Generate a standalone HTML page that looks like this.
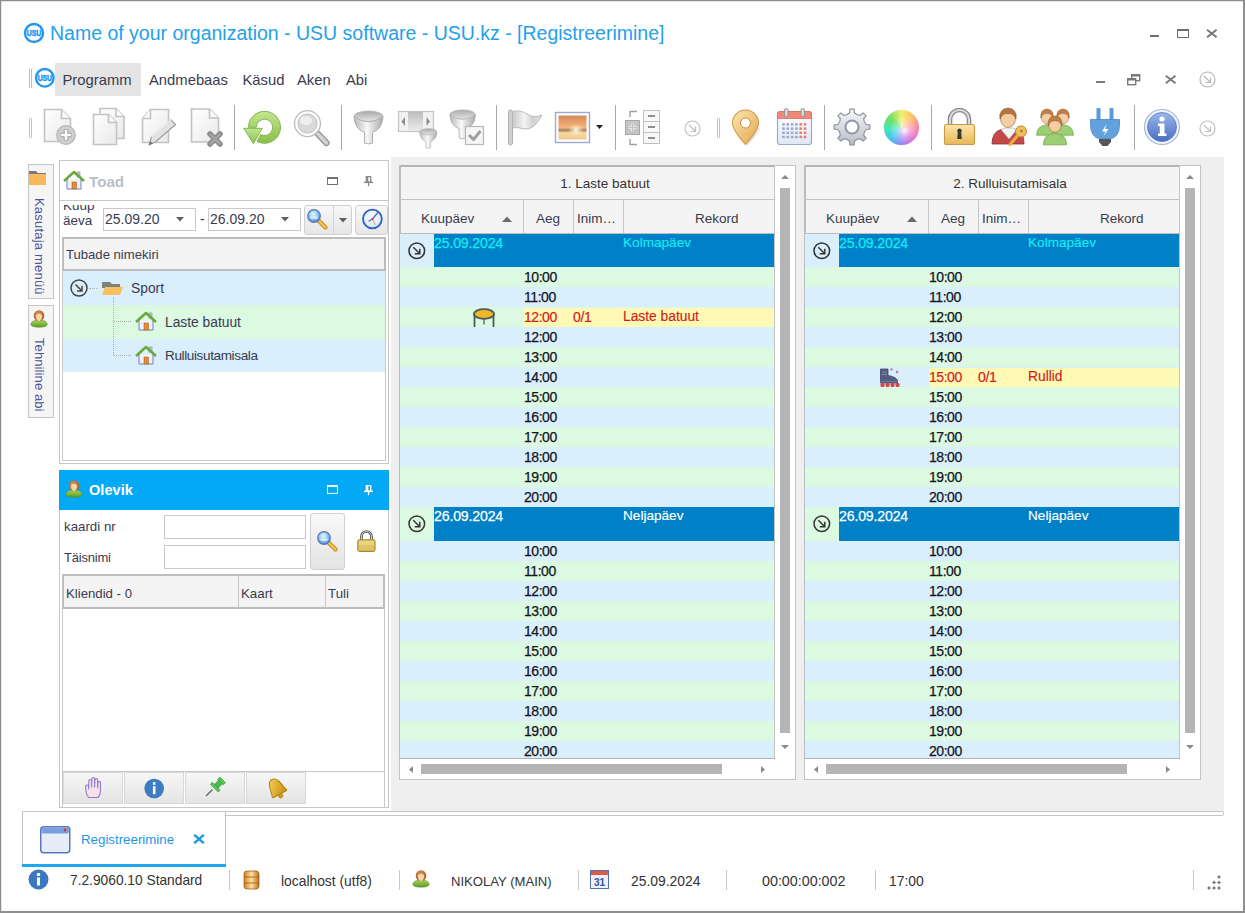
<!DOCTYPE html><html><head><meta charset="utf-8"><style>
html,body{margin:0;padding:0;}
body{width:1245px;height:913px;overflow:hidden;position:relative;background:#fff;font-family:"Liberation Sans", sans-serif;}
div,svg{box-sizing:border-box;}
</style></head><body><div style="position:absolute;left:0px;top:0px;width:1245px;height:913px;border:1px solid #8e8e8e;border-right:2px solid #8e8e8e;border-bottom:2px solid #8e8e8e;box-shadow:inset 1px 1px 0 #e4e4e4;"></div><svg style="position:absolute;left:23px;top:22px;" width="22" height="22" viewBox="0 0 22 22"><circle cx="11" cy="11" r="9" fill="none" stroke="#2196f3" stroke-width="2.4"/><text x="11" y="14.0" text-anchor="middle" font-family="Liberation Sans" font-weight="bold" font-size="8.5" textLength="14.6" lengthAdjust="spacingAndGlyphs" fill="#2196f3" stroke="#2196f3" stroke-width="0.5">USU</text></svg><div style="position:absolute;left:50px;top:22.24px;font-size:19.5px;line-height:22px;color:#25a0ea;font-weight:normal;white-space:nowrap;">Name of your organization - USU software - USU.kz - [Registreerimine]</div><div style="position:absolute;left:1150px;top:35px;width:9px;height:2px;background:#6e6e6e;"></div><div style="position:absolute;left:1177px;top:29px;width:12px;height:9px;border:1.5px solid #6e6e6e;border-top-width:2.5px;"></div><svg style="position:absolute;left:1206px;top:29px;" width="12" height="9" viewBox="0 0 12 9"><path d="M1 0.8 L10.6 8.2 M10.6 0.8 L1 8.2" stroke="#777" stroke-width="2"/></svg><div style="position:absolute;left:29px;top:69px;width:1px;height:19px;background:#bdbdbd;"></div><div style="position:absolute;left:31px;top:69px;width:1px;height:19px;background:#bdbdbd;"></div><svg style="position:absolute;left:34.2px;top:67.2px;" width="21.6" height="21.6" viewBox="0 0 21.6 21.6"><circle cx="10.8" cy="10.8" r="8.8" fill="none" stroke="#2196f3" stroke-width="2.4"/><text x="10.8" y="13.8" text-anchor="middle" font-family="Liberation Sans" font-weight="bold" font-size="8.4" textLength="14.3" lengthAdjust="spacingAndGlyphs" fill="#2196f3" stroke="#2196f3" stroke-width="0.5">USU</text></svg><div style="position:absolute;left:55px;top:63px;width:86px;height:33px;background:#e4e4e4;"></div><div style="position:absolute;left:62.5px;top:71.87px;font-size:14.8px;line-height:17px;color:#3b3b4d;font-weight:normal;white-space:nowrap;">Programm</div><div style="position:absolute;left:149px;top:71.87px;font-size:14.8px;line-height:17px;color:#3b3b4d;font-weight:normal;white-space:nowrap;">Andmebaas</div><div style="position:absolute;left:242.5px;top:71.87px;font-size:14.8px;line-height:17px;color:#3b3b4d;font-weight:normal;white-space:nowrap;">Käsud</div><div style="position:absolute;left:297px;top:71.87px;font-size:14.8px;line-height:17px;color:#3b3b4d;font-weight:normal;white-space:nowrap;">Aken</div><div style="position:absolute;left:346px;top:71.87px;font-size:14.8px;line-height:17px;color:#3b3b4d;font-weight:normal;white-space:nowrap;">Abi</div><div style="position:absolute;left:1096px;top:81px;width:9px;height:2px;background:#7a7a7a;"></div><svg style="position:absolute;left:1127px;top:73px;" width="14" height="13" viewBox="0 0 14 13"><rect x="4.7" y="1.7" width="8" height="6" fill="none" stroke="#7a7a7a" stroke-width="1.4"/><path d="M4.7 2.5 H12.7" stroke="#7a7a7a" stroke-width="2"/><rect x="0.7" y="5.7" width="8" height="6" fill="#fff" stroke="#7a7a7a" stroke-width="1.4"/><path d="M0.7 6.5 H8.7" stroke="#7a7a7a" stroke-width="2"/></svg><svg style="position:absolute;left:1165px;top:75px;" width="12" height="9" viewBox="0 0 12 9"><path d="M0.8 0.8 L10.5 8.2 M10.5 0.8 L0.8 8.2" stroke="#7a7a7a" stroke-width="2"/></svg><svg style="position:absolute;left:1197.5px;top:70.0px;" width="19.0" height="19.0" viewBox="0 0 19.0 19.0"><circle cx="9.5" cy="9.5" r="7.5" fill="none" stroke="#b8b8b8" stroke-width="1.2"/><path d="M6.0 6.0 L12.5 12.5 M12.5 7.5 L12.5 12.5 L7.5 12.5" fill="none" stroke="#b8b8b8" stroke-width="1.2"/></svg><div style="position:absolute;left:29px;top:118px;width:1px;height:20px;background:#c4c4c4;"></div><div style="position:absolute;left:31px;top:118px;width:1px;height:20px;background:#c4c4c4;"></div><div style="position:absolute;left:234px;top:105px;width:1px;height:45px;background:#a8a8a8;"></div><div style="position:absolute;left:341px;top:105px;width:1px;height:45px;background:#a8a8a8;"></div><div style="position:absolute;left:496px;top:105px;width:1px;height:45px;background:#a8a8a8;"></div><div style="position:absolute;left:615px;top:105px;width:1px;height:45px;background:#a8a8a8;"></div><div style="position:absolute;left:824px;top:105px;width:1px;height:45px;background:#a8a8a8;"></div><div style="position:absolute;left:931px;top:105px;width:1px;height:45px;background:#a8a8a8;"></div><div style="position:absolute;left:1134px;top:105px;width:1px;height:45px;background:#a8a8a8;"></div><div style="position:absolute;left:717px;top:118px;width:1px;height:20px;background:#c4c4c4;"></div><div style="position:absolute;left:719px;top:118px;width:1px;height:20px;background:#c4c4c4;"></div><svg style="position:absolute;left:0;top:0" width="0" height="0"><defs><linearGradient id="dg" x1="0" y1="0" x2="1" y2="1"><stop offset="0" stop-color="#ffffff"/><stop offset="1" stop-color="#e9e9e9"/></linearGradient><linearGradient id="gg" x1="0" y1="0" x2="0" y2="1"><stop offset="0" stop-color="#c4e68e"/><stop offset="1" stop-color="#86c04a"/></linearGradient><linearGradient id="fg" x1="0" y1="0" x2="1" y2="0"><stop offset="0" stop-color="#b8b8b8"/><stop offset="0.45" stop-color="#f8f8f8"/><stop offset="1" stop-color="#a8a8a8"/></linearGradient><linearGradient id="fb" x1="0" y1="0" x2="0" y2="1"><stop offset="0" stop-color="#a8a8a8"/><stop offset="1" stop-color="#e8e8e8"/></linearGradient><linearGradient id="pg" x1="0" y1="0" x2="0" y2="1"><stop offset="0" stop-color="#d88a5a"/><stop offset="0.5" stop-color="#f3b47a"/><stop offset="0.62" stop-color="#a08060"/><stop offset="0.72" stop-color="#f8d8a0"/><stop offset="1" stop-color="#f0c890"/></linearGradient><radialGradient id="sun" cx="0.5" cy="0.5" r="0.5"><stop offset="0" stop-color="#fffbe8"/><stop offset="1" stop-color="#fff0c0" stop-opacity="0"/></radialGradient><linearGradient id="mp" x1="0" y1="0" x2="1" y2="1"><stop offset="0" stop-color="#fde6b0"/><stop offset="1" stop-color="#e0a850"/></linearGradient><linearGradient id="gr" x1="0" y1="0" x2="0" y2="1"><stop offset="0" stop-color="#f6f8fa"/><stop offset="1" stop-color="#b8bec8"/></linearGradient><linearGradient id="lk" x1="0" y1="0" x2="0" y2="1"><stop offset="0" stop-color="#fbe6a8"/><stop offset="1" stop-color="#e8b858"/></linearGradient><linearGradient id="ig" x1="0" y1="0" x2="0" y2="1"><stop offset="0" stop-color="#9cb8ec"/><stop offset="1" stop-color="#4a6cc0"/></linearGradient><linearGradient id="cal" x1="0" y1="0" x2="0" y2="1"><stop offset="0" stop-color="#ffffff"/><stop offset="1" stop-color="#dfe6f4"/></linearGradient></defs></svg><svg style="position:absolute;left:43px;top:108px;" width="36" height="38" viewBox="0 0 36 38"><g transform="translate(0.5,0.5)"><path d="M1 1 H18 L27 10 V33 H1 Z" fill="url(#dg)" stroke="#c2c2c2" stroke-width="1.6"/><path d="M18 1 V10 H27" fill="#fafafa" stroke="#c2c2c2" stroke-width="1.6"/></g><circle cx="23" cy="27" r="9.3" fill="#cfcfcf" stroke="#b4b4b4" stroke-width="1.2"/><path d="M23 21.5 V32.5 M17.5 27 H28.5" stroke="#9c9c9c" stroke-width="4.6"/><path d="M23 22 V32 M18 27 H28" stroke="#fbfbfb" stroke-width="2.6"/></svg><svg style="position:absolute;left:91px;top:106px;" width="36" height="40" viewBox="0 0 36 40"><g transform="translate(8,1.5)"><path d="M1 1 H17 L25 9 V31 H1 Z" fill="url(#dg)" stroke="#c2c2c2" stroke-width="1.6"/><path d="M17 1 V9 H25" fill="#fafafa" stroke="#c2c2c2" stroke-width="1.6"/></g><g transform="translate(1.5,7.5)"><path d="M1 1 H16 L24 9 V31 H1 Z" fill="url(#dg)" stroke="#c2c2c2" stroke-width="1.6"/><path d="M16 1 V9 H24" fill="#fafafa" stroke="#c2c2c2" stroke-width="1.6"/></g></svg><svg style="position:absolute;left:139px;top:106px;" width="40" height="42" viewBox="0 0 40 42"><g transform="translate(2.5,2.5)"><path d="M9 1 H27 V34 H1 V10 Z" fill="url(#dg)" stroke="#c2c2c2" stroke-width="1.6"/><path d="M9 1 V10 H1" fill="#fafafa" stroke="#c2c2c2" stroke-width="1.6"/></g><path d="M10 39 L12.5 31 L32 14 L36.5 18.5 L17 35.5 Z" fill="#e2e2e2" stroke="#9e9e9e" stroke-width="1.2" stroke-linejoin="round"/><path d="M12.5 31 L32 14" stroke="#f8f8f8" stroke-width="1.2"/><path d="M10 39 L11.3 35 L14 37.5 Z" fill="#777"/></svg><svg style="position:absolute;left:188px;top:106px;" width="40" height="42" viewBox="0 0 40 42"><g transform="translate(2.5,2)"><path d="M1 1 H19 L28 10 V34 H1 Z" fill="url(#dg)" stroke="#c2c2c2" stroke-width="1.6"/><path d="M19 1 V10 H28" fill="#fafafa" stroke="#c2c2c2" stroke-width="1.6"/></g><path d="M22 28 L32 38 M32 28 L22 38" stroke="#8c8c8c" stroke-width="5.5" stroke-linecap="round"/><path d="M22.5 28.5 L31.5 37.5 M31.5 28.5 L22.5 37.5" stroke="#a4a4a4" stroke-width="2.5" stroke-linecap="round"/></svg><svg style="position:absolute;left:240px;top:108px;" width="46" height="40" viewBox="0 0 46 40"><path d="M8.50 19.30 A16 16 0 1 1 16.99 33.43 L20.65 26.54 A8.2 8.2 0 1 0 16.30 19.30 Z" fill="url(#gg)" stroke="#86b454" stroke-width="1"/><path d="M3.7 20.3 L22.2 20.3 L13.4 35.7 Z" fill="url(#gg)" stroke="#86b454" stroke-width="1" stroke-linejoin="round"/></svg><svg style="position:absolute;left:290px;top:106px;" width="42" height="42" viewBox="0 0 42 42"><path d="M28 28 L36.5 37" stroke="#9a9a9a" stroke-width="6.5" stroke-linecap="round"/><path d="M28 28 L36.5 37" stroke="#d4d4d4" stroke-width="3.5" stroke-linecap="round"/><circle cx="17.5" cy="17.6" r="13" fill="#fbfbfb" stroke="#bdbdbd" stroke-width="1.3"/><circle cx="17.5" cy="17.6" r="9.5" fill="#d9d9d9" stroke="#c0c0c0" stroke-width="1"/><ellipse cx="16" cy="14.5" rx="6" ry="4.5" fill="#eeeeee"/></svg><svg style="position:absolute;left:353px;top:110px;" width="34" height="36" viewBox="0 0 34 36"><ellipse cx="15.5" cy="6.5" rx="14.5" ry="5.5" fill="url(#fb)" stroke="#b8b8b8" stroke-width="1"/><path d="M1 6.5 Q1.5 19 11.5 22.5 V33 Q15.5 35 19.5 33 V22.5 Q29.5 19 30 6.5 Q15.5 17 1 6.5 Z" fill="url(#fg)" stroke="#b0b0b0" stroke-width="1"/></svg><svg style="position:absolute;left:396px;top:109px;" width="44" height="40" viewBox="0 0 44 40"><rect x="2.5" y="2.5" width="35" height="20" fill="#f2f2f2" stroke="#c4c4c4" stroke-width="1.2"/><rect x="12" y="3" width="15" height="19" fill="url(#fb)" opacity="0.7"/><path d="M9 8 L5.5 12.5 L9 17 Z M30.5 8 L34 12.5 L30.5 17 Z" fill="#8c8c8c"/><g transform="translate(23,19) scale(0.6)"><ellipse cx="15.5" cy="6.5" rx="14.5" ry="5.5" fill="url(#fb)" stroke="#b8b8b8" stroke-width="1"/><path d="M1 6.5 Q1.5 19 11.5 22.5 V33 Q15.5 35 19.5 33 V22.5 Q29.5 19 30 6.5 Q15.5 17 1 6.5 Z" fill="url(#fg)" stroke="#b0b0b0" stroke-width="1"/></g></svg><svg style="position:absolute;left:448px;top:108px;" width="40" height="40" viewBox="0 0 40 40"><g transform="translate(1,1) scale(0.88)"><ellipse cx="15.5" cy="6.5" rx="14.5" ry="5.5" fill="url(#fb)" stroke="#b8b8b8" stroke-width="1"/><path d="M1 6.5 Q1.5 19 11.5 22.5 V33 Q15.5 35 19.5 33 V22.5 Q29.5 19 30 6.5 Q15.5 17 1 6.5 Z" fill="url(#fg)" stroke="#b0b0b0" stroke-width="1"/></g><rect x="17.5" y="18.5" width="18" height="18" fill="#f6f6f6" stroke="#b8b8b8" stroke-width="1.2"/><path d="M21 27 L25.5 31.5 L32.5 23" fill="none" stroke="#a0a0a0" stroke-width="3" stroke-linejoin="round"/></svg><svg style="position:absolute;left:506px;top:108px;" width="40" height="40" viewBox="0 0 40 40"><defs><linearGradient id="flg" x1="0" y1="0" x2="1" y2="0"><stop offset="0" stop-color="#c8c8c8"/><stop offset="0.4" stop-color="#f4f4f4"/><stop offset="0.7" stop-color="#d0d0d0"/><stop offset="1" stop-color="#e8e8e8"/></linearGradient></defs><rect x="2.5" y="2" width="4" height="35" rx="2" fill="#d0d0d0" stroke="#a8a8a8" stroke-width="0.9"/><path d="M6.5 3.5 Q14 1.5 21 6 Q28 10.5 36 7 Q33 13 29 17 Q23 23 14 20 Q10 19 6.5 20 Z" fill="url(#flg)" stroke="#b4b4b4" stroke-width="0.9"/></svg><svg style="position:absolute;left:554px;top:111px;" width="38" height="34" viewBox="0 0 38 34"><rect x="1.5" y="1.5" width="34" height="30" fill="#fff" stroke="#9aabd8" stroke-width="1.4"/><rect x="4.5" y="4.5" width="28" height="24" fill="url(#pg)"/><ellipse cx="22" cy="19" rx="8" ry="6" fill="url(#sun)"/></svg><svg style="position:absolute;left:596px;top:125px;" width="8" height="5" viewBox="0 0 8 5"><path d="M0 0 H7 L3.5 4 Z" fill="#222"/></svg><svg style="position:absolute;left:623px;top:108px;" width="40" height="40" viewBox="0 0 40 40"><path d="M7 9 V3.5 H14 M7 31 V36.5 H14" fill="none" stroke="#a0a0a0" stroke-width="1.4"/><rect x="2.5" y="12.5" width="14" height="14" fill="#c4c4c4" stroke="#a8a8a8"/><path d="M9.5 15.5 V23.5 M5.5 19.5 H13.5" stroke="#e8e8e8" stroke-width="2.8"/><path d="M9.5 15.5 V23.5 M5.5 19.5 H13.5" stroke="#9a9a9a" stroke-width="1" opacity="0.5"/><rect x="20.5" y="2.5" width="16" height="11" fill="#f8f8f8" stroke="#c0c0c0"/><rect x="20.5" y="13.5" width="16" height="11" fill="#f8f8f8" stroke="#c0c0c0"/><rect x="20.5" y="24.5" width="16" height="11" fill="#f8f8f8" stroke="#c0c0c0"/><path d="M25 8 H32 M25 19 H32 M25 30 H32" stroke="#8e8e8e" stroke-width="2.2"/></svg><svg style="position:absolute;left:682.5px;top:118.5px;" width="19.0" height="19.0" viewBox="0 0 19.0 19.0"><circle cx="9.5" cy="9.5" r="7.5" fill="none" stroke="#c0c0c0" stroke-width="1.2"/><path d="M6.0 6.0 L12.5 12.5 M12.5 7.5 L12.5 12.5 L7.5 12.5" fill="none" stroke="#c0c0c0" stroke-width="1.2"/></svg><svg style="position:absolute;left:729px;top:107px;" width="36" height="40" viewBox="0 0 36 40"><path d="M17.5 37.5 Q26 28 30 21" stroke="#d8d8d8" stroke-width="3" fill="none" opacity="0.7"/><path d="M16.5 37.5 Q3.5 23 3.5 16 A13 13 0 0 1 29.5 16 Q29.5 23 16.5 37.5 Z" fill="url(#mp)" stroke="#d09a48" stroke-width="1.1"/><circle cx="16.5" cy="16" r="5" fill="#fff" stroke="#c89040" stroke-width="1"/></svg><svg style="position:absolute;left:776px;top:108px;" width="38" height="40" viewBox="0 0 38 40"><rect x="1.5" y="3.5" width="34" height="33" rx="2.5" fill="url(#cal)" stroke="#9aaad0" stroke-width="1.2"/><path d="M1.5 6 Q1.5 3.5 4 3.5 H33 Q35.5 3.5 35.5 6 V10.5 H1.5 Z" fill="#ef8a7a" stroke="#d87060" stroke-width="0.8"/><rect x="8.5" y="0.5" width="3.5" height="8" rx="1.5" fill="#d8d8d8" stroke="#888" stroke-width="0.8"/><rect x="25" y="0.5" width="3.5" height="8" rx="1.5" fill="#d8d8d8" stroke="#888" stroke-width="0.8"/><rect x="6.2" y="15.2" width="2.6" height="2.4" fill="#9aa6cc"/><rect x="10.5" y="15.2" width="2.6" height="2.4" fill="#9aa6cc"/><rect x="14.8" y="15.2" width="2.6" height="2.4" fill="#9aa6cc"/><rect x="19.1" y="15.2" width="2.6" height="2.4" fill="#9aa6cc"/><rect x="23.4" y="15.2" width="2.6" height="2.4" fill="#f07a66"/><rect x="27.7" y="15.2" width="2.6" height="2.4" fill="#f07a66"/><rect x="6.2" y="19.4" width="2.6" height="2.4" fill="#9aa6cc"/><rect x="10.5" y="19.4" width="2.6" height="2.4" fill="#9aa6cc"/><rect x="14.8" y="19.4" width="2.6" height="2.4" fill="#9aa6cc"/><rect x="19.1" y="19.4" width="2.6" height="2.4" fill="#9aa6cc"/><rect x="23.4" y="19.4" width="2.6" height="2.4" fill="#f07a66"/><rect x="27.7" y="19.4" width="2.6" height="2.4" fill="#f07a66"/><rect x="6.2" y="23.6" width="2.6" height="2.4" fill="#9aa6cc"/><rect x="10.5" y="23.6" width="2.6" height="2.4" fill="#9aa6cc"/><rect x="14.8" y="23.6" width="2.6" height="2.4" fill="#9aa6cc"/><rect x="19.1" y="23.6" width="2.6" height="2.4" fill="#9aa6cc"/><rect x="23.4" y="23.6" width="2.6" height="2.4" fill="#f07a66"/><rect x="27.7" y="23.6" width="2.6" height="2.4" fill="#f07a66"/><rect x="6.2" y="27.8" width="2.6" height="2.4" fill="#9aa6cc"/><rect x="10.5" y="27.8" width="2.6" height="2.4" fill="#9aa6cc"/><rect x="14.8" y="27.8" width="2.6" height="2.4" fill="#9aa6cc"/><rect x="19.1" y="27.8" width="2.6" height="2.4" fill="#9aa6cc"/><rect x="23.4" y="27.8" width="2.6" height="2.4" fill="#f07a66"/><rect x="27.7" y="27.8" width="2.6" height="2.4" fill="#f07a66"/></svg><svg style="position:absolute;left:833px;top:108px;" width="38" height="38" viewBox="0 0 38 38"><path d="M14.49 6.27 L16.73 4.68 L16.81 1.13 L21.19 1.13 L21.27 4.68 L23.51 6.27 L24.81 6.82 L27.52 7.27 L30.08 4.82 L33.18 7.92 L30.73 10.48 L31.18 13.19 L31.73 14.49 L33.32 16.73 L36.87 16.81 L36.87 21.19 L33.32 21.27 L31.73 23.51 L31.18 24.81 L30.73 27.52 L33.18 30.08 L30.08 33.18 L27.52 30.73 L24.81 31.18 L23.51 31.73 L21.27 33.32 L21.19 36.87 L16.81 36.87 L16.73 33.32 L14.49 31.73 L13.19 31.18 L10.48 30.73 L7.92 33.18 L4.82 30.08 L7.27 27.52 L6.82 24.81 L6.27 23.51 L4.68 21.27 L1.13 21.19 L1.13 16.81 L4.68 16.73 L6.27 14.49 L6.82 13.19 L7.27 10.48 L4.82 7.92 L7.92 4.82 L10.48 7.27 L13.19 6.82 Z" fill="url(#gr)" stroke="#8c929c" stroke-width="1.2" stroke-linejoin="round"/><circle cx="19" cy="19" r="6.5" fill="#fff" stroke="#9098a4" stroke-width="2"/></svg><div style="position:absolute;left:884px;top:110px;width:35px;height:35px;border-radius:50%;background:radial-gradient(circle at 58% 58%, rgba(255,255,255,0.95) 0, rgba(255,255,255,0.45) 22%, rgba(255,255,255,0) 55%),conic-gradient(from 0deg, #f0f070, #ffbe60 45deg, #f87a98 90deg, #e050d0 135deg, #8a78f0 180deg, #40c0f0 220deg, #40e6b8 265deg, #70e060 310deg, #f0f070 360deg);box-shadow:0 0 1px rgba(0,0,0,0.2);"></div><svg style="position:absolute;left:943px;top:108px;" width="36" height="40" viewBox="0 0 36 40"><g transform="scale(1.0)"><path d="M7 17 V11.5 A9.5 9.5 0 0 1 26 11.5 V17" fill="none" stroke="#8a8e94" stroke-width="4.6"/><path d="M7 17 V11.5 A9.5 9.5 0 0 1 26 11.5 V17" fill="none" stroke="#d8dce0" stroke-width="2"/><rect x="1.5" y="16.5" width="30" height="20" rx="2" fill="url(#lk)" stroke="#c89a48" stroke-width="1.1"/><path d="M14.8 24.5 A2.3 2.3 0 1 1 18.2 24.5 L18.8 31 H14.2 Z" fill="#3a3a3a"/></g></svg><svg style="position:absolute;left:989px;top:106px;" width="40" height="42" viewBox="0 0 40 42"><path d="M3 38 Q3 26 12 23.5 L20 29 L28 23.5 Q35 26 35 38 Z" fill="#c4484a" stroke="#8c3030" stroke-width="0.8"/><path d="M12 23.5 L20 33 L28 23.5 L24 22 H16 Z" fill="#f4f4f4" stroke="#b0b0b0" stroke-width="0.6"/><ellipse cx="19" cy="12.5" rx="7.5" ry="9" fill="#f5cda2" stroke="#b88058" stroke-width="0.8"/><path d="M11 13 Q9.5 3 19 2 Q28.5 3 27 13 Q25 7 19 7.5 Q13 7 11 13 Z" fill="#b8743c" stroke="#8a5028" stroke-width="0.6"/><circle cx="32" cy="25.5" r="5.5" fill="#f0c060" stroke="#b88828" stroke-width="1"/><circle cx="32.5" cy="25" r="1.6" fill="#b88828"/><path d="M28.5 29.5 L21 38.5" stroke="#e8b040" stroke-width="3.2" stroke-linecap="round"/></svg><svg style="position:absolute;left:1035px;top:107px;" width="42" height="40" viewBox="0 0 42 40"><g transform="translate(12,13) scale(0.95)"><path d="M-11 16 Q-11 6 0 5 Q11 6 11 16 Z" fill="#9ccf74" stroke="#78a850" stroke-width="0.8"/><ellipse cx="0" cy="-3" rx="6" ry="7" fill="#f5cda2" stroke="#b88058" stroke-width="0.8"/><path d="M-6.5 -2 Q-7.5 -11 0 -11.5 Q7.5 -11 6.5 -2 Q5 -7 0 -7 Q-5 -7 -6.5 -2 Z" fill="#c08048" stroke="#8a5028" stroke-width="0.5"/></g><g transform="translate(28,13) scale(0.95)"><path d="M-11 16 Q-11 6 0 5 Q11 6 11 16 Z" fill="#9ccf74" stroke="#78a850" stroke-width="0.8"/><ellipse cx="0" cy="-3" rx="6" ry="7" fill="#f5cda2" stroke="#b88058" stroke-width="0.8"/><path d="M-6.5 -2 Q-7.5 -11 0 -11.5 Q7.5 -11 6.5 -2 Q5 -7 0 -7 Q-5 -7 -6.5 -2 Z" fill="#c08048" stroke="#8a5028" stroke-width="0.5"/></g><g transform="translate(20,21) scale(1.05)"><path d="M-11 16 Q-11 6 0 5 Q11 6 11 16 Z" fill="#9ccf74" stroke="#78a850" stroke-width="0.8"/><ellipse cx="0" cy="-3" rx="6" ry="7" fill="#f5cda2" stroke="#b88058" stroke-width="0.8"/><path d="M-6.5 -2 Q-7.5 -11 0 -11.5 Q7.5 -11 6.5 -2 Q5 -7 0 -7 Q-5 -7 -6.5 -2 Z" fill="#c08048" stroke="#8a5028" stroke-width="0.5"/></g></svg><svg style="position:absolute;left:1089px;top:107px;" width="32" height="40" viewBox="0 0 32 40"><rect x="7.5" y="1" width="4" height="14" rx="1" fill="#5a9ad8"/><rect x="20.5" y="1" width="4" height="14" rx="1" fill="#5a9ad8"/><path d="M1.5 12.5 H30.5 V18 Q30.5 30 21 32 H11 Q1.5 30 1.5 18 Z" fill="#62a2dc" stroke="#4a88c4" stroke-width="0.8"/><path d="M17.5 17 L13 24.5 H16.5 L14.5 29.5 L19.5 22 H16 Z" fill="#fff"/><path d="M10 32 H22 V35 L18.5 39 H13.5 L10 35 Z" fill="#555"/></svg><svg style="position:absolute;left:1143px;top:108px;" width="38" height="38" viewBox="0 0 38 38"><circle cx="19" cy="19" r="17.5" fill="#eef2fa" stroke="#a8b8d8" stroke-width="1.2"/><circle cx="19" cy="19" r="14.5" fill="url(#ig)" stroke="#5a78c0" stroke-width="0.8"/><circle cx="19" cy="11" r="2.6" fill="#fff"/><path d="M15 15.5 H21.5 V25.5 H23.5 V28 H15 V25.5 H16.8 V18 H15 Z" fill="#fff"/></svg><svg style="position:absolute;left:1197.5px;top:118.5px;" width="19.0" height="19.0" viewBox="0 0 19.0 19.0"><circle cx="9.5" cy="9.5" r="7.5" fill="none" stroke="#c0c0c0" stroke-width="1.2"/><path d="M6.0 6.0 L12.5 12.5 M12.5 7.5 L12.5 12.5 L7.5 12.5" fill="none" stroke="#c0c0c0" stroke-width="1.2"/></svg><div style="position:absolute;left:391px;top:157px;width:833px;height:654px;background:#efefef;"></div><div style="position:absolute;left:28px;top:164px;width:26px;height:135px;background:#f5f5f5;border:1px solid #c6c6c6;"></div><div style="position:absolute;left:28px;top:305px;width:26px;height:113px;background:#f5f5f5;border:1px solid #c6c6c6;"></div><svg style="position:absolute;left:29px;top:170px;" width="18" height="16" viewBox="0 0 18 16"><path d="M0 1 H7 L9 3 H17 V5 H0 Z" fill="#7a7a7a"/><rect x="0" y="4" width="17" height="11" fill="#f9b95a"/></svg><div style="position:absolute;left:46px;top:197.5px;transform-origin:0 0;transform:rotate(90deg);font-size:13px;line-height:14px;color:#4a5698;white-space:nowrap;letter-spacing:0.2px;">Kasutaja menüü</div><svg style="position:absolute;left:30px;top:310px;" width="19" height="19" viewBox="0 0 19 19"><g transform="scale(0.98)"><defs><linearGradient id="pbg" x1="0" y1="0" x2="0" y2="1"><stop offset="0" stop-color="#a8d860"/><stop offset="1" stop-color="#5c9a22"/></linearGradient><radialGradient id="phr" cx="0.45" cy="0.4" r="0.6"><stop offset="0" stop-color="#e0a060"/><stop offset="1" stop-color="#a85a28"/></radialGradient></defs><path d="M0.8 14.5 Q1.2 10.3 9.2 10.1 Q17.2 10.3 17.6 14.5 Q17.4 17.6 9.2 17.6 Q1 17.6 0.8 14.5 Z" fill="url(#pbg)" stroke="#558a28" stroke-width="0.5"/><ellipse cx="9.2" cy="5.8" rx="5.4" ry="5.6" fill="url(#phr)"/><path d="M6 6 Q6.5 3.8 9.4 3.9 Q12.2 4 12.3 6.5 Q12.3 10.5 9.4 11.6 Q6.2 10.6 6 6 Z" fill="#f8d6a8"/></g></svg><div style="position:absolute;left:46px;top:338px;transform-origin:0 0;transform:rotate(90deg);font-size:13px;line-height:14px;color:#4a5698;white-space:nowrap;letter-spacing:0.1px;">Tehniline abi</div><div style="position:absolute;left:59px;top:160px;width:330px;height:304px;border:1px solid #c6c6c6;background:#fff;"></div><div style="position:absolute;left:60px;top:200px;width:328px;height:1px;background:#c6c6c6;"></div><svg style="position:absolute;left:63px;top:170px;" width="22" height="20" viewBox="0 0 22 20"><path d="M4 9 V19 H18 V9" fill="#eef0fa" stroke="#7080c0" stroke-width="1"/><rect x="14" y="2" width="3" height="5" fill="#c8cce8" stroke="#7080c0" stroke-width="0.6"/><path d="M1 11 L11 2 L21 11" fill="none" stroke="#6aaa3a" stroke-width="2.6" stroke-linejoin="round"/><rect x="9" y="12" width="4.5" height="7" fill="#e88a30" stroke="#a05a18" stroke-width="0.5"/></svg><div style="position:absolute;left:89px;top:172.53px;font-size:15.2px;line-height:17px;color:#b9bec8;font-weight:bold;white-space:nowrap;">Toad</div><div style="position:absolute;left:326.5px;top:176.5px;width:11.3px;height:8.7px;border:1.4px solid #707070;border-top-width:2.4px;"></div><svg style="position:absolute;left:364px;top:176px;" width="10" height="11" viewBox="0 0 10 11"><path d="M2.3 0.7 H6.7 V6.2 H2.3 Z" fill="none" stroke="#8a8a8a" stroke-width="1.3"/><rect x="2.3" y="0.7" width="2" height="5.5" fill="#8a8a8a"/><rect x="0" y="5.6" width="9" height="1.5" fill="#8a8a8a"/><rect x="3.9" y="7" width="1.3" height="3.2" fill="#8a8a8a"/></svg><div style="position:absolute;left:63px;top:205px;width:36px;height:28px;overflow:hidden;"><div style="position:absolute;left:0;top:-7.5px;font-size:13.5px;line-height:15px;color:#3a3a55;">Kuup<br>äeva<br>:</div></div><div style="position:absolute;left:103px;top:208px;width:93px;height:23px;border:1px solid #c9c9c9;background:#fff;"></div><div style="position:absolute;left:105px;top:211px;width:55px;overflow:hidden;font-size:14px;line-height:17px;color:#3a3a55;white-space:nowrap;">25.09.2024</div><svg style="position:absolute;left:176px;top:217px;" width="9" height="5" viewBox="0 0 9 5"><path d="M0 0 H8 L4 4.5 Z" fill="#606060"/></svg><div style="position:absolute;left:200px;top:211.15px;font-size:14px;line-height:16px;color:#333;font-weight:normal;white-space:nowrap;">-</div><div style="position:absolute;left:208px;top:208px;width:93px;height:23px;border:1px solid #c9c9c9;background:#fff;"></div><div style="position:absolute;left:210px;top:211px;width:55px;overflow:hidden;font-size:14px;line-height:17px;color:#3a3a55;white-space:nowrap;">26.09.2024</div><svg style="position:absolute;left:281px;top:217px;" width="9" height="5" viewBox="0 0 9 5"><path d="M0 0 H8 L4 4.5 Z" fill="#606060"/></svg><div style="position:absolute;left:304px;top:205px;width:48px;height:30px;border:1px solid #d0d0d0;border-radius:3px;background:linear-gradient(#f8f8f8,#e6e6e6);"></div><div style="position:absolute;left:333px;top:206px;width:1px;height:28px;background:#d4d4d4;"></div><svg style="position:absolute;left:305px;top:207px;" width="24" height="24" viewBox="0 0 24 24"><defs><radialGradient id="lens" cx="0.45" cy="0.35" r="0.7"><stop offset="0" stop-color="#e8f6ff"/><stop offset="0.5" stop-color="#8cc8f8"/><stop offset="1" stop-color="#3a80e0"/></radialGradient></defs><path d="M14 14 L20.5 20.5" stroke="#c88a20" stroke-width="4.2" stroke-linecap="round"/><path d="M14 14 L20.5 20.5" stroke="#f8c850" stroke-width="2.2" stroke-linecap="round"/><circle cx="9" cy="9" r="6.3" fill="url(#lens)" stroke="#5a78b0" stroke-width="1.2"/><ellipse cx="9" cy="10.5" rx="4" ry="1.6" fill="#dff2ff" opacity="0.8"/></svg><svg style="position:absolute;left:339px;top:218px;" width="9" height="5" viewBox="0 0 9 5"><path d="M0 0 H8 L4 4.5 Z" fill="#606060"/></svg><div style="position:absolute;left:355px;top:205px;width:33px;height:30px;border:1px solid #d0d0d0;border-radius:3px;background:linear-gradient(#f8f8f8,#e6e6e6);"></div><svg style="position:absolute;left:361px;top:208px;" width="23" height="23" viewBox="0 0 23 23"><defs><radialGradient id="clk" cx="0.5" cy="0.4" r="0.6"><stop offset="0" stop-color="#ffffff"/><stop offset="1" stop-color="#cfe6fa"/></radialGradient></defs><circle cx="11.4" cy="11" r="9.4" fill="url(#clk)" stroke="#2a62c0" stroke-width="1.8"/><path d="M11.4 11 L16.5 5 M11.4 11 L8 13" stroke="#4a6ad0" stroke-width="1.3" stroke-linecap="round"/><path d="M11.4 11 L14 16.5" stroke="#f0a080" stroke-width="1.1" stroke-linecap="round"/><circle cx="11.4" cy="11" r="1.3" fill="#e05050"/></svg><div style="position:absolute;left:62px;top:237px;width:324px;height:224px;border:1px solid #c8c8c8;background:#fff;"></div><div style="position:absolute;left:62px;top:237px;width:324px;height:34px;border:2px solid #bdbdbd;background:#f4f4f4;"></div><div style="position:absolute;left:66px;top:247.26px;font-size:13.1px;line-height:15px;color:#3a3a50;font-weight:normal;white-space:nowrap;">Tubade nimekiri</div><div style="position:absolute;left:63px;top:271px;width:322px;height:34px;background:#d9effc;"></div><div style="position:absolute;left:63px;top:305px;width:322px;height:34px;background:#dcf9e2;"></div><div style="position:absolute;left:63px;top:339px;width:322px;height:33px;background:#d9effc;"></div><svg style="position:absolute;left:69px;top:278px;" width="20" height="20" viewBox="0 0 20 20"><circle cx="10" cy="10" r="8" fill="none" stroke="#444" stroke-width="1.5"/><path d="M6.5 6.5 L13 13 M13 8 L13 13 L8 13" fill="none" stroke="#444" stroke-width="1.5"/></svg><div style="position:absolute;left:89px;top:288px;width:8px;height:1px;border-top:1px dotted #aaa;"></div><svg style="position:absolute;left:102px;top:281px;" width="22" height="15" viewBox="0 0 22 15"><path d="M0 1 H8 L10 3 H18 V7 H0 Z" fill="#808080"/><path d="M0 14 L3 6 H21 L18 14 Z" fill="#fbbf5e"/></svg><div style="position:absolute;left:131px;top:281.22px;font-size:13.8px;line-height:16px;color:#3a3a50;font-weight:normal;white-space:nowrap;">Sport</div><div style="position:absolute;left:113px;top:297px;width:1px;height:58px;border-left:1px dotted #aaa;"></div><div style="position:absolute;left:114px;top:321px;width:17px;height:1px;border-top:1px dotted #aaa;"></div><div style="position:absolute;left:114px;top:355px;width:17px;height:1px;border-top:1px dotted #aaa;"></div><svg style="position:absolute;left:135px;top:311px;" width="22" height="20" viewBox="0 0 22 20"><path d="M4 9 V19 H18 V9" fill="#eef0fa" stroke="#7080c0" stroke-width="1"/><rect x="14" y="2" width="3" height="5" fill="#c8cce8" stroke="#7080c0" stroke-width="0.6"/><path d="M1 11 L11 2 L21 11" fill="none" stroke="#6aaa3a" stroke-width="2.6" stroke-linejoin="round"/><rect x="9" y="12" width="4.5" height="7" fill="#e88a30" stroke="#a05a18" stroke-width="0.5"/></svg><div style="position:absolute;left:165px;top:314.52px;font-size:13.8px;line-height:16px;color:#3a3a50;font-weight:normal;white-space:nowrap;">Laste batuut</div><svg style="position:absolute;left:135px;top:345px;" width="22" height="20" viewBox="0 0 22 20"><path d="M4 9 V19 H18 V9" fill="#eef0fa" stroke="#7080c0" stroke-width="1"/><rect x="14" y="2" width="3" height="5" fill="#c8cce8" stroke="#7080c0" stroke-width="0.6"/><path d="M1 11 L11 2 L21 11" fill="none" stroke="#6aaa3a" stroke-width="2.6" stroke-linejoin="round"/><rect x="9" y="12" width="4.5" height="7" fill="#e88a30" stroke="#a05a18" stroke-width="0.5"/></svg><div style="position:absolute;left:165px;top:348.29px;font-size:13.6px;line-height:16px;color:#3a3a50;font-weight:normal;white-space:nowrap;letter-spacing:-0.4px;">Rulluisutamisala</div><div style="position:absolute;left:59px;top:470px;width:330px;height:338px;border:1px solid #c6c6c6;background:#fff;"></div><div style="position:absolute;left:59px;top:470px;width:330px;height:40px;background:#03a9f4;"></div><svg style="position:absolute;left:65px;top:480px;" width="19" height="19" viewBox="0 0 19 19"><g transform="scale(0.98)"><defs><linearGradient id="pbg" x1="0" y1="0" x2="0" y2="1"><stop offset="0" stop-color="#a8d860"/><stop offset="1" stop-color="#5c9a22"/></linearGradient><radialGradient id="phr" cx="0.45" cy="0.4" r="0.6"><stop offset="0" stop-color="#e0a060"/><stop offset="1" stop-color="#a85a28"/></radialGradient></defs><path d="M0.8 14.5 Q1.2 10.3 9.2 10.1 Q17.2 10.3 17.6 14.5 Q17.4 17.6 9.2 17.6 Q1 17.6 0.8 14.5 Z" fill="url(#pbg)" stroke="#558a28" stroke-width="0.5"/><ellipse cx="9.2" cy="5.8" rx="5.4" ry="5.6" fill="url(#phr)"/><path d="M6 6 Q6.5 3.8 9.4 3.9 Q12.2 4 12.3 6.5 Q12.3 10.5 9.4 11.6 Q6.2 10.6 6 6 Z" fill="#f8d6a8"/></g></svg><div style="position:absolute;left:89px;top:481.94px;font-size:14.6px;line-height:17px;color:#fff;font-weight:bold;white-space:nowrap;">Olevik</div><div style="position:absolute;left:326.5px;top:485.3px;width:11.3px;height:8.7px;border:1.4px solid #fff;border-top-width:2.4px;"></div><svg style="position:absolute;left:364px;top:485px;" width="10" height="11" viewBox="0 0 10 11"><path d="M2.3 0.7 H6.7 V6.2 H2.3 Z" fill="none" stroke="#fff" stroke-width="1.3"/><rect x="2.3" y="0.7" width="2" height="5.5" fill="#fff"/><rect x="0" y="5.6" width="9" height="1.5" fill="#fff"/><rect x="3.9" y="7" width="1.3" height="3.2" fill="#fff"/></svg><div style="position:absolute;left:64px;top:519.39px;font-size:13.3px;line-height:15px;color:#3a3a50;font-weight:normal;white-space:nowrap;">kaardi nr</div><div style="position:absolute;left:64px;top:549.50px;font-size:13.0px;line-height:15px;color:#3a3a50;font-weight:normal;white-space:nowrap;letter-spacing:-0.2px;">Täisnimi</div><div style="position:absolute;left:164px;top:515px;width:142px;height:24px;border:1px solid #c9c9c9;background:#fff;"></div><div style="position:absolute;left:164px;top:545px;width:142px;height:24px;border:1px solid #c9c9c9;background:#fff;"></div><div style="position:absolute;left:310px;top:513px;width:35px;height:57px;border:1px solid #d0d0d0;border-radius:3px;background:linear-gradient(#f8f8f8,#e4e4e4);"></div><svg style="position:absolute;left:315px;top:529px;" width="24" height="24" viewBox="0 0 24 24"><defs><radialGradient id="lens" cx="0.45" cy="0.35" r="0.7"><stop offset="0" stop-color="#e8f6ff"/><stop offset="0.5" stop-color="#8cc8f8"/><stop offset="1" stop-color="#3a80e0"/></radialGradient></defs><path d="M14 14 L20.5 20.5" stroke="#c88a20" stroke-width="4.2" stroke-linecap="round"/><path d="M14 14 L20.5 20.5" stroke="#f8c850" stroke-width="2.2" stroke-linecap="round"/><circle cx="9" cy="9" r="6.3" fill="url(#lens)" stroke="#5a78b0" stroke-width="1.2"/><ellipse cx="9" cy="10.5" rx="4" ry="1.6" fill="#dff2ff" opacity="0.8"/></svg><svg style="position:absolute;left:356px;top:530px;" width="21" height="23" viewBox="0 0 21 23"><path d="M5.5 10 V6.5 A5 5 0 0 1 15.5 6.5 V10" fill="none" stroke="#4a4a4a" stroke-width="2.6"/><path d="M5.5 10 V6.5 A5 5 0 0 1 15.5 6.5 V10" fill="none" stroke="#e8e8e8" stroke-width="0.9"/><rect x="1.8" y="9.8" width="17.2" height="11.6" rx="1.8" fill="#dcc468" stroke="#a88a28" stroke-width="1.1"/><rect x="3" y="11" width="15" height="4" fill="#eedc90" opacity="0.7"/></svg><div style="position:absolute;left:62px;top:574px;width:323px;height:234px;border:1px solid #c8c8c8;background:#fff;"></div><div style="position:absolute;left:62px;top:574px;width:323px;height:35px;border:2px solid #bdbdbd;background:#f4f4f4;"></div><div style="position:absolute;left:238px;top:576px;width:1px;height:32px;background:#c8c8c8;"></div><div style="position:absolute;left:325px;top:576px;width:1px;height:32px;background:#c8c8c8;"></div><div style="position:absolute;left:66px;top:585.93px;font-size:13.2px;line-height:15px;color:#3a3a50;font-weight:normal;white-space:nowrap;">Kliendid - 0</div><div style="position:absolute;left:241px;top:585.89px;font-size:13.3px;line-height:15px;color:#3a3a50;font-weight:normal;white-space:nowrap;">Kaart</div><div style="position:absolute;left:328px;top:585.89px;font-size:13.3px;line-height:15px;color:#3a3a50;font-weight:normal;white-space:nowrap;">Tuli</div><div style="position:absolute;left:63px;top:771px;width:322px;height:1px;background:#c8c8c8;"></div><div style="position:absolute;left:63px;top:772px;width:60px;height:32px;border:1px solid #d8d8d8;background:linear-gradient(#f7f7f7,#e4e4e4);"></div><div style="position:absolute;left:124px;top:772px;width:60px;height:32px;border:1px solid #d8d8d8;background:linear-gradient(#f7f7f7,#e4e4e4);"></div><div style="position:absolute;left:185px;top:772px;width:60px;height:32px;border:1px solid #d8d8d8;background:linear-gradient(#f7f7f7,#e4e4e4);"></div><div style="position:absolute;left:246px;top:772px;width:60px;height:32px;border:1px solid #d8d8d8;background:linear-gradient(#f7f7f7,#e4e4e4);"></div><svg style="position:absolute;left:83px;top:776px;" width="20" height="24" viewBox="0 0 20 24"><path d="M5.5 21.5 Q3 18 2.8 14 L2.6 10.5 Q2.6 9 4 9 Q5.4 9 5.5 10.5 L5.6 13 L5.8 5 Q5.8 3.5 7.2 3.5 Q8.6 3.5 8.6 5 V11 L8.8 3 Q8.8 1.5 10.2 1.5 Q11.6 1.5 11.6 3 V11 L11.9 4 Q11.9 2.6 13.2 2.6 Q14.6 2.6 14.6 4 V12 L15 6.5 Q15 5.2 16.2 5.2 Q17.5 5.2 17.5 6.5 V14.5 Q17.5 19 15 21.5 Z" fill="#f8e2ea" stroke="#8a7ccc" stroke-width="1.1" stroke-linejoin="round"/></svg><svg style="position:absolute;left:143.5px;top:777.5px;" width="21" height="21" viewBox="0 0 21 21"><circle cx="10.2" cy="10.5" r="9.8" fill="#3d7cc0"/><rect x="8.9" y="4.2" width="2.6" height="2.6" fill="#fff"/><rect x="8.9" y="8.2" width="2.6" height="8" fill="#fff"/></svg><svg style="position:absolute;left:203px;top:776px;" width="24" height="22" viewBox="0 0 24 22"><path d="M3.5 19.5 L9 14" stroke="#6a6a70" stroke-width="1.4" stroke-linecap="round"/><g transform="translate(14,9.5) rotate(45)"><rect x="-4" y="-8" width="8" height="3.2" rx="0.8" fill="#58c858" stroke="#3a9a3a" stroke-width="0.7"/><rect x="-2.6" y="-5.2" width="5.2" height="6.4" fill="#4cbc4c" stroke="#3a9a3a" stroke-width="0.7"/><rect x="-5.6" y="1" width="11.2" height="2.8" rx="0.8" fill="#58c858" stroke="#3a9a3a" stroke-width="0.7"/></g></svg><svg style="position:absolute;left:264px;top:776px;" width="24" height="24" viewBox="0 0 24 24"><defs><linearGradient id="bell" x1="0" y1="0" x2="1" y2="1"><stop offset="0" stop-color="#f8d860"/><stop offset="1" stop-color="#c88a10"/></linearGradient></defs><g transform="translate(12,11) rotate(-28)"><path d="M-7.5 6 Q-6.5 0 -5.5 -3.5 Q-4 -8.5 0 -8.5 Q4 -8.5 5.5 -3.5 Q6.5 0 7.5 6 Q8.8 7.4 7.5 8.2 H-7.5 Q-8.8 7.4 -7.5 6 Z" fill="url(#bell)" stroke="#b07a08" stroke-width="0.9"/><circle cx="0" cy="10" r="2.2" fill="#d89a18" stroke="#a87008" stroke-width="0.6"/></g></svg><div style="position:absolute;left:399px;top:165px;width:397px;height:615px;border:1px solid #c2c2c2;background:#fff;"></div><div style="position:absolute;left:399px;top:165px;width:376px;height:2px;background:#b4b4b4;"></div><div style="position:absolute;left:399px;top:165px;width:2px;height:594px;background:#bdbdbd;"></div><div style="position:absolute;left:775px;top:165px;width:21px;height:1px;background:#c4c4c4;"></div><div style="position:absolute;left:401px;top:167px;width:373px;height:32px;background:#f4f4f4;"></div><div style="position:absolute;left:400px;top:199px;width:374px;height:1px;background:#c2c2c2;"></div><div style="position:absolute;left:505px;width:200px;top:176px;text-align:center;font-size:13.5px;line-height:16px;color:#333;">1. Laste batuut</div><div style="position:absolute;left:401px;top:200px;width:373px;height:33px;background:#f4f4f4;"></div><div style="position:absolute;left:400px;top:233px;width:374px;height:1px;background:#bcbcbc;"></div><div style="position:absolute;left:523px;top:200px;width:1px;height:33px;background:#c8c8c8;"></div><div style="position:absolute;left:573px;top:200px;width:1px;height:33px;background:#c8c8c8;"></div><div style="position:absolute;left:623px;top:200px;width:1px;height:33px;background:#c8c8c8;"></div><div style="position:absolute;left:774px;top:165px;width:1px;height:594px;background:#c4c4c4;"></div><div style="position:absolute;left:421px;top:210.62px;font-size:13.5px;line-height:16px;color:#3a3a4e;font-weight:normal;white-space:nowrap;">Kuupäev</div><svg style="position:absolute;left:502px;top:216px;" width="11" height="7" viewBox="0 0 11 7"><path d="M0 6 L5 0.5 L10 6 Z" fill="#6a6a6a"/></svg><div style="position:absolute;left:536px;top:210.62px;font-size:13.5px;line-height:16px;color:#3a3a4e;font-weight:normal;white-space:nowrap;">Aeg</div><div style="position:absolute;left:577px;top:210.62px;font-size:13.5px;line-height:16px;color:#3a3a4e;font-weight:normal;white-space:nowrap;">Inim…</div><div style="position:absolute;left:695px;top:210.62px;font-size:13.5px;line-height:16px;color:#3a3a4e;font-weight:normal;white-space:nowrap;">Rekord</div><div style="position:absolute;left:400px;top:234px;width:374px;height:33px;background:#d9effc;"></div><div style="position:absolute;left:434px;top:234px;width:340px;height:33px;background:#0080c6;"></div><svg style="position:absolute;left:407.2px;top:240.7px;" width="19.6" height="19.6" viewBox="0 0 19.6 19.6"><circle cx="9.8" cy="9.8" r="7.8" fill="none" stroke="#333" stroke-width="1.5"/><path d="M6.300000000000001 6.300000000000001 L12.8 12.8 M12.8 7.800000000000001 L12.8 12.8 L7.800000000000001 12.8" fill="none" stroke="#333" stroke-width="1.5"/></svg><div style="position:absolute;left:434px;top:235.01px;font-size:14.1px;line-height:16px;color:#12ecf6;font-weight:normal;white-space:nowrap;letter-spacing:-0.15px;-webkit-text-stroke:0.25px #12ecf6;">25.09.2024</div><div style="position:absolute;left:623px;top:235.19px;font-size:13.6px;line-height:16px;color:#12ecf6;font-weight:normal;white-space:nowrap;-webkit-text-stroke:0.15px #12ecf6;">Kolmapäev</div><div style="position:absolute;left:400px;top:267px;width:374px;height:20px;background:#dcf9e2;"></div><div style="position:absolute;left:524px;top:268.75px;font-size:14px;line-height:16px;color:#14141e;font-weight:normal;white-space:nowrap;letter-spacing:-0.45px;-webkit-text-stroke:0.25px #14141e;">10:00</div><div style="position:absolute;left:400px;top:287px;width:374px;height:20px;background:#d9effc;"></div><div style="position:absolute;left:524px;top:288.75px;font-size:14px;line-height:16px;color:#14141e;font-weight:normal;white-space:nowrap;letter-spacing:-0.45px;-webkit-text-stroke:0.25px #14141e;">11:00</div><div style="position:absolute;left:400px;top:307px;width:374px;height:20px;background:#dcf9e2;"></div><div style="position:absolute;left:524px;top:308px;width:250px;height:19px;background:#fff9b6;"></div><div style="position:absolute;left:524px;top:308.75px;font-size:14px;line-height:16px;color:#d41c1c;font-weight:normal;white-space:nowrap;letter-spacing:-0.45px;-webkit-text-stroke:0.2px #d41c1c;">12:00</div><div style="position:absolute;left:573px;top:308.75px;font-size:14px;line-height:16px;color:#d41c1c;font-weight:normal;white-space:nowrap;letter-spacing:-0.3px;-webkit-text-stroke:0.2px #d41c1c;">0/1</div><div style="position:absolute;left:623px;top:308.82px;font-size:13.8px;line-height:16px;color:#d41c1c;font-weight:normal;white-space:nowrap;-webkit-text-stroke:0.15px #d41c1c;">Laste batuut</div><svg style="position:absolute;left:472px;top:308px;" width="24" height="20" viewBox="0 0 24 20"><path d="M2.5 6 V18.5 M21.5 6 V18.5" stroke="#4e5a5a" stroke-width="1.8" stroke-linecap="round"/><path d="M12 9 V16.5" stroke="#7a8a88" stroke-width="1.8"/><ellipse cx="12" cy="6" rx="10" ry="4.8" fill="#f0b828" stroke="#4e5a5a" stroke-width="1.8"/></svg><div style="position:absolute;left:400px;top:327px;width:374px;height:20px;background:#d9effc;"></div><div style="position:absolute;left:524px;top:328.75px;font-size:14px;line-height:16px;color:#14141e;font-weight:normal;white-space:nowrap;letter-spacing:-0.45px;-webkit-text-stroke:0.25px #14141e;">12:00</div><div style="position:absolute;left:400px;top:347px;width:374px;height:20px;background:#dcf9e2;"></div><div style="position:absolute;left:524px;top:348.75px;font-size:14px;line-height:16px;color:#14141e;font-weight:normal;white-space:nowrap;letter-spacing:-0.45px;-webkit-text-stroke:0.25px #14141e;">13:00</div><div style="position:absolute;left:400px;top:367px;width:374px;height:20px;background:#d9effc;"></div><div style="position:absolute;left:524px;top:368.75px;font-size:14px;line-height:16px;color:#14141e;font-weight:normal;white-space:nowrap;letter-spacing:-0.45px;-webkit-text-stroke:0.25px #14141e;">14:00</div><div style="position:absolute;left:400px;top:387px;width:374px;height:20px;background:#dcf9e2;"></div><div style="position:absolute;left:524px;top:388.75px;font-size:14px;line-height:16px;color:#14141e;font-weight:normal;white-space:nowrap;letter-spacing:-0.45px;-webkit-text-stroke:0.25px #14141e;">15:00</div><div style="position:absolute;left:400px;top:407px;width:374px;height:20px;background:#d9effc;"></div><div style="position:absolute;left:524px;top:408.75px;font-size:14px;line-height:16px;color:#14141e;font-weight:normal;white-space:nowrap;letter-spacing:-0.45px;-webkit-text-stroke:0.25px #14141e;">16:00</div><div style="position:absolute;left:400px;top:427px;width:374px;height:20px;background:#dcf9e2;"></div><div style="position:absolute;left:524px;top:428.75px;font-size:14px;line-height:16px;color:#14141e;font-weight:normal;white-space:nowrap;letter-spacing:-0.45px;-webkit-text-stroke:0.25px #14141e;">17:00</div><div style="position:absolute;left:400px;top:447px;width:374px;height:20px;background:#d9effc;"></div><div style="position:absolute;left:524px;top:448.75px;font-size:14px;line-height:16px;color:#14141e;font-weight:normal;white-space:nowrap;letter-spacing:-0.45px;-webkit-text-stroke:0.25px #14141e;">18:00</div><div style="position:absolute;left:400px;top:467px;width:374px;height:20px;background:#dcf9e2;"></div><div style="position:absolute;left:524px;top:468.75px;font-size:14px;line-height:16px;color:#14141e;font-weight:normal;white-space:nowrap;letter-spacing:-0.45px;-webkit-text-stroke:0.25px #14141e;">19:00</div><div style="position:absolute;left:400px;top:487px;width:374px;height:20px;background:#d9effc;"></div><div style="position:absolute;left:524px;top:488.75px;font-size:14px;line-height:16px;color:#14141e;font-weight:normal;white-space:nowrap;letter-spacing:-0.45px;-webkit-text-stroke:0.25px #14141e;">20:00</div><div style="position:absolute;left:400px;top:507px;width:374px;height:34px;background:#dcf9e2;"></div><div style="position:absolute;left:434px;top:507px;width:340px;height:34px;background:#0080c6;"></div><svg style="position:absolute;left:407.2px;top:513.7px;" width="19.6" height="19.6" viewBox="0 0 19.6 19.6"><circle cx="9.8" cy="9.8" r="7.8" fill="none" stroke="#333" stroke-width="1.5"/><path d="M6.300000000000001 6.300000000000001 L12.8 12.8 M12.8 7.800000000000001 L12.8 12.8 L7.800000000000001 12.8" fill="none" stroke="#333" stroke-width="1.5"/></svg><div style="position:absolute;left:434px;top:508.01px;font-size:14.1px;line-height:16px;color:#fff;font-weight:normal;white-space:nowrap;letter-spacing:-0.15px;-webkit-text-stroke:0.25px #fff;">26.09.2024</div><div style="position:absolute;left:623px;top:508.19px;font-size:13.6px;line-height:16px;color:#fff;font-weight:normal;white-space:nowrap;-webkit-text-stroke:0.15px #fff;">Neljapäev</div><div style="position:absolute;left:400px;top:541px;width:374px;height:20px;background:#d9effc;"></div><div style="position:absolute;left:524px;top:542.75px;font-size:14px;line-height:16px;color:#14141e;font-weight:normal;white-space:nowrap;letter-spacing:-0.45px;-webkit-text-stroke:0.25px #14141e;">10:00</div><div style="position:absolute;left:400px;top:561px;width:374px;height:20px;background:#dcf9e2;"></div><div style="position:absolute;left:524px;top:562.75px;font-size:14px;line-height:16px;color:#14141e;font-weight:normal;white-space:nowrap;letter-spacing:-0.45px;-webkit-text-stroke:0.25px #14141e;">11:00</div><div style="position:absolute;left:400px;top:581px;width:374px;height:20px;background:#d9effc;"></div><div style="position:absolute;left:524px;top:582.75px;font-size:14px;line-height:16px;color:#14141e;font-weight:normal;white-space:nowrap;letter-spacing:-0.45px;-webkit-text-stroke:0.25px #14141e;">12:00</div><div style="position:absolute;left:400px;top:601px;width:374px;height:20px;background:#dcf9e2;"></div><div style="position:absolute;left:524px;top:602.75px;font-size:14px;line-height:16px;color:#14141e;font-weight:normal;white-space:nowrap;letter-spacing:-0.45px;-webkit-text-stroke:0.25px #14141e;">13:00</div><div style="position:absolute;left:400px;top:621px;width:374px;height:20px;background:#d9effc;"></div><div style="position:absolute;left:524px;top:622.75px;font-size:14px;line-height:16px;color:#14141e;font-weight:normal;white-space:nowrap;letter-spacing:-0.45px;-webkit-text-stroke:0.25px #14141e;">14:00</div><div style="position:absolute;left:400px;top:641px;width:374px;height:20px;background:#dcf9e2;"></div><div style="position:absolute;left:524px;top:642.75px;font-size:14px;line-height:16px;color:#14141e;font-weight:normal;white-space:nowrap;letter-spacing:-0.45px;-webkit-text-stroke:0.25px #14141e;">15:00</div><div style="position:absolute;left:400px;top:661px;width:374px;height:20px;background:#d9effc;"></div><div style="position:absolute;left:524px;top:662.75px;font-size:14px;line-height:16px;color:#14141e;font-weight:normal;white-space:nowrap;letter-spacing:-0.45px;-webkit-text-stroke:0.25px #14141e;">16:00</div><div style="position:absolute;left:400px;top:681px;width:374px;height:20px;background:#dcf9e2;"></div><div style="position:absolute;left:524px;top:682.75px;font-size:14px;line-height:16px;color:#14141e;font-weight:normal;white-space:nowrap;letter-spacing:-0.45px;-webkit-text-stroke:0.25px #14141e;">17:00</div><div style="position:absolute;left:400px;top:701px;width:374px;height:20px;background:#d9effc;"></div><div style="position:absolute;left:524px;top:702.75px;font-size:14px;line-height:16px;color:#14141e;font-weight:normal;white-space:nowrap;letter-spacing:-0.45px;-webkit-text-stroke:0.25px #14141e;">18:00</div><div style="position:absolute;left:400px;top:721px;width:374px;height:20px;background:#dcf9e2;"></div><div style="position:absolute;left:524px;top:722.75px;font-size:14px;line-height:16px;color:#14141e;font-weight:normal;white-space:nowrap;letter-spacing:-0.45px;-webkit-text-stroke:0.25px #14141e;">19:00</div><div style="position:absolute;left:400px;top:741px;width:374px;height:20px;background:#d9effc;"></div><div style="position:absolute;left:524px;top:742.75px;font-size:14px;line-height:16px;color:#14141e;font-weight:normal;white-space:nowrap;letter-spacing:-0.45px;-webkit-text-stroke:0.25px #14141e;">20:00</div><div style="position:absolute;left:400px;top:758px;width:375px;height:21px;background:#fff;border-top:1px solid #aeb4bc;"></div><div style="position:absolute;left:775px;top:758px;width:20px;height:21px;background:#fff;"></div><svg style="position:absolute;left:781px;top:175px;" width="8" height="4" viewBox="0 0 8 4"><path d="M0 4 L4 0 L8 4 Z" fill="#8a8a8a"/></svg><div style="position:absolute;left:780px;top:188px;width:10px;height:545px;background:#b5b5b5;"></div><svg style="position:absolute;left:781px;top:745px;" width="8" height="4" viewBox="0 0 8 4"><path d="M0 0 L4 4 L8 0 Z" fill="#8a8a8a"/></svg><svg style="position:absolute;left:409px;top:766px;" width="4" height="7" viewBox="0 0 4 7"><path d="M4 0 L0 3.5 L4 7 Z" fill="#8a8a8a"/></svg><div style="position:absolute;left:421px;top:764px;width:301px;height:10px;background:#b5b5b5;"></div><svg style="position:absolute;left:761px;top:766px;" width="4" height="7" viewBox="0 0 4 7"><path d="M0 0 L4 3.5 L0 7 Z" fill="#8a8a8a"/></svg><div style="position:absolute;left:804px;top:165px;width:397px;height:615px;border:1px solid #c2c2c2;background:#fff;"></div><div style="position:absolute;left:804px;top:165px;width:376px;height:2px;background:#b4b4b4;"></div><div style="position:absolute;left:804px;top:165px;width:2px;height:594px;background:#bdbdbd;"></div><div style="position:absolute;left:1180px;top:165px;width:21px;height:1px;background:#c4c4c4;"></div><div style="position:absolute;left:806px;top:167px;width:373px;height:32px;background:#f4f4f4;"></div><div style="position:absolute;left:805px;top:199px;width:374px;height:1px;background:#c2c2c2;"></div><div style="position:absolute;left:910px;width:200px;top:176px;text-align:center;font-size:13.5px;line-height:16px;color:#333;">2. Rulluisutamisala</div><div style="position:absolute;left:806px;top:200px;width:373px;height:33px;background:#f4f4f4;"></div><div style="position:absolute;left:805px;top:233px;width:374px;height:1px;background:#bcbcbc;"></div><div style="position:absolute;left:928px;top:200px;width:1px;height:33px;background:#c8c8c8;"></div><div style="position:absolute;left:978px;top:200px;width:1px;height:33px;background:#c8c8c8;"></div><div style="position:absolute;left:1028px;top:200px;width:1px;height:33px;background:#c8c8c8;"></div><div style="position:absolute;left:1179px;top:165px;width:1px;height:594px;background:#c4c4c4;"></div><div style="position:absolute;left:826px;top:210.62px;font-size:13.5px;line-height:16px;color:#3a3a4e;font-weight:normal;white-space:nowrap;">Kuupäev</div><svg style="position:absolute;left:907px;top:216px;" width="11" height="7" viewBox="0 0 11 7"><path d="M0 6 L5 0.5 L10 6 Z" fill="#6a6a6a"/></svg><div style="position:absolute;left:941px;top:210.62px;font-size:13.5px;line-height:16px;color:#3a3a4e;font-weight:normal;white-space:nowrap;">Aeg</div><div style="position:absolute;left:982px;top:210.62px;font-size:13.5px;line-height:16px;color:#3a3a4e;font-weight:normal;white-space:nowrap;">Inim…</div><div style="position:absolute;left:1100px;top:210.62px;font-size:13.5px;line-height:16px;color:#3a3a4e;font-weight:normal;white-space:nowrap;">Rekord</div><div style="position:absolute;left:805px;top:234px;width:374px;height:33px;background:#d9effc;"></div><div style="position:absolute;left:839px;top:234px;width:340px;height:33px;background:#0080c6;"></div><svg style="position:absolute;left:812.2px;top:240.7px;" width="19.6" height="19.6" viewBox="0 0 19.6 19.6"><circle cx="9.8" cy="9.8" r="7.8" fill="none" stroke="#333" stroke-width="1.5"/><path d="M6.300000000000001 6.300000000000001 L12.8 12.8 M12.8 7.800000000000001 L12.8 12.8 L7.800000000000001 12.8" fill="none" stroke="#333" stroke-width="1.5"/></svg><div style="position:absolute;left:839px;top:235.01px;font-size:14.1px;line-height:16px;color:#12ecf6;font-weight:normal;white-space:nowrap;letter-spacing:-0.15px;-webkit-text-stroke:0.25px #12ecf6;">25.09.2024</div><div style="position:absolute;left:1028px;top:235.19px;font-size:13.6px;line-height:16px;color:#12ecf6;font-weight:normal;white-space:nowrap;-webkit-text-stroke:0.15px #12ecf6;">Kolmapäev</div><div style="position:absolute;left:805px;top:267px;width:374px;height:20px;background:#dcf9e2;"></div><div style="position:absolute;left:929px;top:268.75px;font-size:14px;line-height:16px;color:#14141e;font-weight:normal;white-space:nowrap;letter-spacing:-0.45px;-webkit-text-stroke:0.25px #14141e;">10:00</div><div style="position:absolute;left:805px;top:287px;width:374px;height:20px;background:#d9effc;"></div><div style="position:absolute;left:929px;top:288.75px;font-size:14px;line-height:16px;color:#14141e;font-weight:normal;white-space:nowrap;letter-spacing:-0.45px;-webkit-text-stroke:0.25px #14141e;">11:00</div><div style="position:absolute;left:805px;top:307px;width:374px;height:20px;background:#dcf9e2;"></div><div style="position:absolute;left:929px;top:308.75px;font-size:14px;line-height:16px;color:#14141e;font-weight:normal;white-space:nowrap;letter-spacing:-0.45px;-webkit-text-stroke:0.25px #14141e;">12:00</div><div style="position:absolute;left:805px;top:327px;width:374px;height:20px;background:#d9effc;"></div><div style="position:absolute;left:929px;top:328.75px;font-size:14px;line-height:16px;color:#14141e;font-weight:normal;white-space:nowrap;letter-spacing:-0.45px;-webkit-text-stroke:0.25px #14141e;">13:00</div><div style="position:absolute;left:805px;top:347px;width:374px;height:20px;background:#dcf9e2;"></div><div style="position:absolute;left:929px;top:348.75px;font-size:14px;line-height:16px;color:#14141e;font-weight:normal;white-space:nowrap;letter-spacing:-0.45px;-webkit-text-stroke:0.25px #14141e;">14:00</div><div style="position:absolute;left:805px;top:367px;width:374px;height:20px;background:#d9effc;"></div><div style="position:absolute;left:929px;top:368px;width:250px;height:19px;background:#fff9b6;"></div><div style="position:absolute;left:929px;top:368.75px;font-size:14px;line-height:16px;color:#d41c1c;font-weight:normal;white-space:nowrap;letter-spacing:-0.45px;-webkit-text-stroke:0.2px #d41c1c;">15:00</div><div style="position:absolute;left:978px;top:368.75px;font-size:14px;line-height:16px;color:#d41c1c;font-weight:normal;white-space:nowrap;letter-spacing:-0.3px;-webkit-text-stroke:0.2px #d41c1c;">0/1</div><div style="position:absolute;left:1028px;top:368.82px;font-size:13.8px;line-height:16px;color:#d41c1c;font-weight:normal;white-space:nowrap;-webkit-text-stroke:0.15px #d41c1c;">Rullid</div><svg style="position:absolute;left:878px;top:367px;" width="24" height="21" viewBox="0 0 24 21"><path d="M2.5 2 H10 V8.5 Q17 9.5 19.5 13 V16 H2.5 Z" fill="#545c80" stroke="#40486a" stroke-width="0.8"/><path d="M4 5 H9 M4 7.5 H9" stroke="#8088a8" stroke-width="1"/><path d="M2.5 14.5 H19.5" stroke="#6a78a0" stroke-width="1.5"/><circle cx="4.5" cy="18" r="2.2" fill="#d04848"/><circle cx="9.5" cy="18" r="2.2" fill="#d04848"/><circle cx="14.5" cy="18" r="2.2" fill="#d04848"/><circle cx="19.5" cy="18" r="2.2" fill="#d04848"/><circle cx="13.5" cy="2.5" r="1.2" fill="#b08888"/><circle cx="19" cy="5" r="1.3" fill="#a08888"/></svg><div style="position:absolute;left:805px;top:387px;width:374px;height:20px;background:#dcf9e2;"></div><div style="position:absolute;left:929px;top:388.75px;font-size:14px;line-height:16px;color:#14141e;font-weight:normal;white-space:nowrap;letter-spacing:-0.45px;-webkit-text-stroke:0.25px #14141e;">15:00</div><div style="position:absolute;left:805px;top:407px;width:374px;height:20px;background:#d9effc;"></div><div style="position:absolute;left:929px;top:408.75px;font-size:14px;line-height:16px;color:#14141e;font-weight:normal;white-space:nowrap;letter-spacing:-0.45px;-webkit-text-stroke:0.25px #14141e;">16:00</div><div style="position:absolute;left:805px;top:427px;width:374px;height:20px;background:#dcf9e2;"></div><div style="position:absolute;left:929px;top:428.75px;font-size:14px;line-height:16px;color:#14141e;font-weight:normal;white-space:nowrap;letter-spacing:-0.45px;-webkit-text-stroke:0.25px #14141e;">17:00</div><div style="position:absolute;left:805px;top:447px;width:374px;height:20px;background:#d9effc;"></div><div style="position:absolute;left:929px;top:448.75px;font-size:14px;line-height:16px;color:#14141e;font-weight:normal;white-space:nowrap;letter-spacing:-0.45px;-webkit-text-stroke:0.25px #14141e;">18:00</div><div style="position:absolute;left:805px;top:467px;width:374px;height:20px;background:#dcf9e2;"></div><div style="position:absolute;left:929px;top:468.75px;font-size:14px;line-height:16px;color:#14141e;font-weight:normal;white-space:nowrap;letter-spacing:-0.45px;-webkit-text-stroke:0.25px #14141e;">19:00</div><div style="position:absolute;left:805px;top:487px;width:374px;height:20px;background:#d9effc;"></div><div style="position:absolute;left:929px;top:488.75px;font-size:14px;line-height:16px;color:#14141e;font-weight:normal;white-space:nowrap;letter-spacing:-0.45px;-webkit-text-stroke:0.25px #14141e;">20:00</div><div style="position:absolute;left:805px;top:507px;width:374px;height:34px;background:#dcf9e2;"></div><div style="position:absolute;left:839px;top:507px;width:340px;height:34px;background:#0080c6;"></div><svg style="position:absolute;left:812.2px;top:513.7px;" width="19.6" height="19.6" viewBox="0 0 19.6 19.6"><circle cx="9.8" cy="9.8" r="7.8" fill="none" stroke="#333" stroke-width="1.5"/><path d="M6.300000000000001 6.300000000000001 L12.8 12.8 M12.8 7.800000000000001 L12.8 12.8 L7.800000000000001 12.8" fill="none" stroke="#333" stroke-width="1.5"/></svg><div style="position:absolute;left:839px;top:508.01px;font-size:14.1px;line-height:16px;color:#fff;font-weight:normal;white-space:nowrap;letter-spacing:-0.15px;-webkit-text-stroke:0.25px #fff;">26.09.2024</div><div style="position:absolute;left:1028px;top:508.19px;font-size:13.6px;line-height:16px;color:#fff;font-weight:normal;white-space:nowrap;-webkit-text-stroke:0.15px #fff;">Neljapäev</div><div style="position:absolute;left:805px;top:541px;width:374px;height:20px;background:#d9effc;"></div><div style="position:absolute;left:929px;top:542.75px;font-size:14px;line-height:16px;color:#14141e;font-weight:normal;white-space:nowrap;letter-spacing:-0.45px;-webkit-text-stroke:0.25px #14141e;">10:00</div><div style="position:absolute;left:805px;top:561px;width:374px;height:20px;background:#dcf9e2;"></div><div style="position:absolute;left:929px;top:562.75px;font-size:14px;line-height:16px;color:#14141e;font-weight:normal;white-space:nowrap;letter-spacing:-0.45px;-webkit-text-stroke:0.25px #14141e;">11:00</div><div style="position:absolute;left:805px;top:581px;width:374px;height:20px;background:#d9effc;"></div><div style="position:absolute;left:929px;top:582.75px;font-size:14px;line-height:16px;color:#14141e;font-weight:normal;white-space:nowrap;letter-spacing:-0.45px;-webkit-text-stroke:0.25px #14141e;">12:00</div><div style="position:absolute;left:805px;top:601px;width:374px;height:20px;background:#dcf9e2;"></div><div style="position:absolute;left:929px;top:602.75px;font-size:14px;line-height:16px;color:#14141e;font-weight:normal;white-space:nowrap;letter-spacing:-0.45px;-webkit-text-stroke:0.25px #14141e;">13:00</div><div style="position:absolute;left:805px;top:621px;width:374px;height:20px;background:#d9effc;"></div><div style="position:absolute;left:929px;top:622.75px;font-size:14px;line-height:16px;color:#14141e;font-weight:normal;white-space:nowrap;letter-spacing:-0.45px;-webkit-text-stroke:0.25px #14141e;">14:00</div><div style="position:absolute;left:805px;top:641px;width:374px;height:20px;background:#dcf9e2;"></div><div style="position:absolute;left:929px;top:642.75px;font-size:14px;line-height:16px;color:#14141e;font-weight:normal;white-space:nowrap;letter-spacing:-0.45px;-webkit-text-stroke:0.25px #14141e;">15:00</div><div style="position:absolute;left:805px;top:661px;width:374px;height:20px;background:#d9effc;"></div><div style="position:absolute;left:929px;top:662.75px;font-size:14px;line-height:16px;color:#14141e;font-weight:normal;white-space:nowrap;letter-spacing:-0.45px;-webkit-text-stroke:0.25px #14141e;">16:00</div><div style="position:absolute;left:805px;top:681px;width:374px;height:20px;background:#dcf9e2;"></div><div style="position:absolute;left:929px;top:682.75px;font-size:14px;line-height:16px;color:#14141e;font-weight:normal;white-space:nowrap;letter-spacing:-0.45px;-webkit-text-stroke:0.25px #14141e;">17:00</div><div style="position:absolute;left:805px;top:701px;width:374px;height:20px;background:#d9effc;"></div><div style="position:absolute;left:929px;top:702.75px;font-size:14px;line-height:16px;color:#14141e;font-weight:normal;white-space:nowrap;letter-spacing:-0.45px;-webkit-text-stroke:0.25px #14141e;">18:00</div><div style="position:absolute;left:805px;top:721px;width:374px;height:20px;background:#dcf9e2;"></div><div style="position:absolute;left:929px;top:722.75px;font-size:14px;line-height:16px;color:#14141e;font-weight:normal;white-space:nowrap;letter-spacing:-0.45px;-webkit-text-stroke:0.25px #14141e;">19:00</div><div style="position:absolute;left:805px;top:741px;width:374px;height:20px;background:#d9effc;"></div><div style="position:absolute;left:929px;top:742.75px;font-size:14px;line-height:16px;color:#14141e;font-weight:normal;white-space:nowrap;letter-spacing:-0.45px;-webkit-text-stroke:0.25px #14141e;">20:00</div><div style="position:absolute;left:805px;top:758px;width:375px;height:21px;background:#fff;border-top:1px solid #aeb4bc;"></div><div style="position:absolute;left:1180px;top:758px;width:20px;height:21px;background:#fff;"></div><svg style="position:absolute;left:1186px;top:175px;" width="8" height="4" viewBox="0 0 8 4"><path d="M0 4 L4 0 L8 4 Z" fill="#8a8a8a"/></svg><div style="position:absolute;left:1185px;top:188px;width:10px;height:545px;background:#b5b5b5;"></div><svg style="position:absolute;left:1186px;top:745px;" width="8" height="4" viewBox="0 0 8 4"><path d="M0 0 L4 4 L8 0 Z" fill="#8a8a8a"/></svg><svg style="position:absolute;left:814px;top:766px;" width="4" height="7" viewBox="0 0 4 7"><path d="M4 0 L0 3.5 L4 7 Z" fill="#8a8a8a"/></svg><div style="position:absolute;left:826px;top:764px;width:301px;height:10px;background:#b5b5b5;"></div><svg style="position:absolute;left:1166px;top:766px;" width="4" height="7" viewBox="0 0 4 7"><path d="M0 0 L4 3.5 L0 7 Z" fill="#8a8a8a"/></svg><div style="position:absolute;left:226px;top:811px;width:998px;height:5px;border:1px solid #c4c4c4;border-left:none;border-radius:0 2px 2px 0;background:#fff;"></div><div style="position:absolute;left:22px;top:811px;width:204px;height:53px;border:1px solid #c4c4c4;border-bottom:none;background:#fff;"></div><div style="position:absolute;left:22px;top:864px;width:204px;height:2.5px;background:#1ea8ee;"></div><svg style="position:absolute;left:40px;top:826px;" width="31" height="28" viewBox="0 0 31 28"><rect x="0.75" y="0.75" width="29" height="26" rx="3" fill="#e6ecf8" stroke="#5a78b8" stroke-width="1.5"/><rect x="1.5" y="1.5" width="27.5" height="6" rx="2" fill="#78a0e0"/><circle cx="25" cy="4" r="1.4" fill="#e03020"/></svg><div style="position:absolute;left:81px;top:831.89px;font-size:13.3px;line-height:15px;color:#1e96e6;font-weight:normal;white-space:nowrap;">Registreerimine</div><svg style="position:absolute;left:193px;top:834px;" width="12" height="10" viewBox="0 0 12 10"><path d="M1.2 0.8 L10.8 9.2 M10.8 0.8 L1.2 9.2" stroke="#1e9ae8" stroke-width="2.4"/></svg><svg style="position:absolute;left:28px;top:869px;" width="21" height="21" viewBox="0 0 21 21"><circle cx="10.5" cy="10.5" r="10" fill="#3a78c0"/><circle cx="10.5" cy="5.5" r="1.8" fill="#fff"/><rect x="9" y="8.5" width="3" height="8" fill="#fff"/></svg><div style="position:absolute;left:70px;top:873.24px;font-size:13.75px;line-height:16px;color:#333;font-weight:normal;white-space:nowrap;">7.2.9060.10 Standard</div><div style="position:absolute;left:229px;top:870px;width:1px;height:20px;background:#c8c8c8;"></div><div style="position:absolute;left:399px;top:870px;width:1px;height:20px;background:#c8c8c8;"></div><div style="position:absolute;left:578px;top:870px;width:1px;height:20px;background:#c8c8c8;"></div><div style="position:absolute;left:726px;top:870px;width:1px;height:20px;background:#c8c8c8;"></div><div style="position:absolute;left:875px;top:870px;width:1px;height:20px;background:#c8c8c8;"></div><div style="position:absolute;left:1193px;top:870px;width:1px;height:20px;background:#c8c8c8;"></div><svg style="position:absolute;left:243px;top:869px;" width="17" height="21" viewBox="0 0 17 21"><defs><linearGradient id="db" x1="0" y1="0" x2="1" y2="0"><stop offset="0" stop-color="#d08020"/><stop offset="0.5" stop-color="#fbe0a0"/><stop offset="1" stop-color="#c07018"/></linearGradient></defs><rect x="1" y="2" width="15" height="18" rx="3" fill="url(#db)" stroke="#a06010" stroke-width="0.8"/><path d="M1 8 H16 M1 14 H16" stroke="#a06010" stroke-width="0.8"/></svg><div style="position:absolute;left:281px;top:873.20px;font-size:13.85px;line-height:16px;color:#333;font-weight:normal;white-space:nowrap;">localhost (utf8)</div><svg style="position:absolute;left:412px;top:870px;" width="19" height="19" viewBox="0 0 19 19"><g transform="scale(0.98)"><defs><linearGradient id="pbg" x1="0" y1="0" x2="0" y2="1"><stop offset="0" stop-color="#a8d860"/><stop offset="1" stop-color="#5c9a22"/></linearGradient><radialGradient id="phr" cx="0.45" cy="0.4" r="0.6"><stop offset="0" stop-color="#e0a060"/><stop offset="1" stop-color="#a85a28"/></radialGradient></defs><path d="M0.8 14.5 Q1.2 10.3 9.2 10.1 Q17.2 10.3 17.6 14.5 Q17.4 17.6 9.2 17.6 Q1 17.6 0.8 14.5 Z" fill="url(#pbg)" stroke="#558a28" stroke-width="0.5"/><ellipse cx="9.2" cy="5.8" rx="5.4" ry="5.6" fill="url(#phr)"/><path d="M6 6 Q6.5 3.8 9.4 3.9 Q12.2 4 12.3 6.5 Q12.3 10.5 9.4 11.6 Q6.2 10.6 6 6 Z" fill="#f8d6a8"/></g></svg><div style="position:absolute;left:451px;top:873.96px;font-size:13.1px;line-height:15px;color:#333;font-weight:normal;white-space:nowrap;">NIKOLAY (MAIN)</div><svg style="position:absolute;left:590px;top:870px;" width="20" height="19" viewBox="0 0 20 19"><rect x="0.5" y="0.5" width="18" height="18" fill="#eef2fa" stroke="#5070b0"/><rect x="1" y="1" width="17" height="4" fill="#e05a48"/><text x="9.5" y="15.5" text-anchor="middle" font-family="Liberation Sans" font-weight="bold" font-size="10" fill="#3050a0">31</text></svg><div style="position:absolute;left:631px;top:873.18px;font-size:13.9px;line-height:16px;color:#333;font-weight:normal;white-space:nowrap;">25.09.2024</div><div style="position:absolute;left:762px;top:873.05px;font-size:14.3px;line-height:16px;color:#333;font-weight:normal;white-space:nowrap;">00:00:00:002</div><div style="position:absolute;left:889px;top:873.18px;font-size:13.9px;line-height:16px;color:#333;font-weight:normal;white-space:nowrap;">17:00</div><svg style="position:absolute;left:1205px;top:873px;" width="18" height="18" viewBox="0 0 18 18"><path d="M14 1.7999999999999998 L14.7 3.3 L16.2 4 L14.7 4.7 L14 6.2 L13.3 4.7 L11.8 4 L13.3 3.3 Z" fill="#6a6a6a"/><path d="M9 7.3 L9.7 8.8 L11.2 9.5 L9.7 10.2 L9 11.7 L8.3 10.2 L6.8 9.5 L8.3 8.8 Z" fill="#6a6a6a"/><path d="M14 7.3 L14.7 8.8 L16.2 9.5 L14.7 10.2 L14 11.7 L13.3 10.2 L11.8 9.5 L13.3 8.8 Z" fill="#6a6a6a"/><path d="M4 12.8 L4.7 14.3 L6.2 15 L4.7 15.7 L4 17.2 L3.3 15.7 L1.7999999999999998 15 L3.3 14.3 Z" fill="#6a6a6a"/><path d="M9 12.8 L9.7 14.3 L11.2 15 L9.7 15.7 L9 17.2 L8.3 15.7 L6.8 15 L8.3 14.3 Z" fill="#6a6a6a"/><path d="M14 12.8 L14.7 14.3 L16.2 15 L14.7 15.7 L14 17.2 L13.3 15.7 L11.8 15 L13.3 14.3 Z" fill="#6a6a6a"/></svg></body></html>
